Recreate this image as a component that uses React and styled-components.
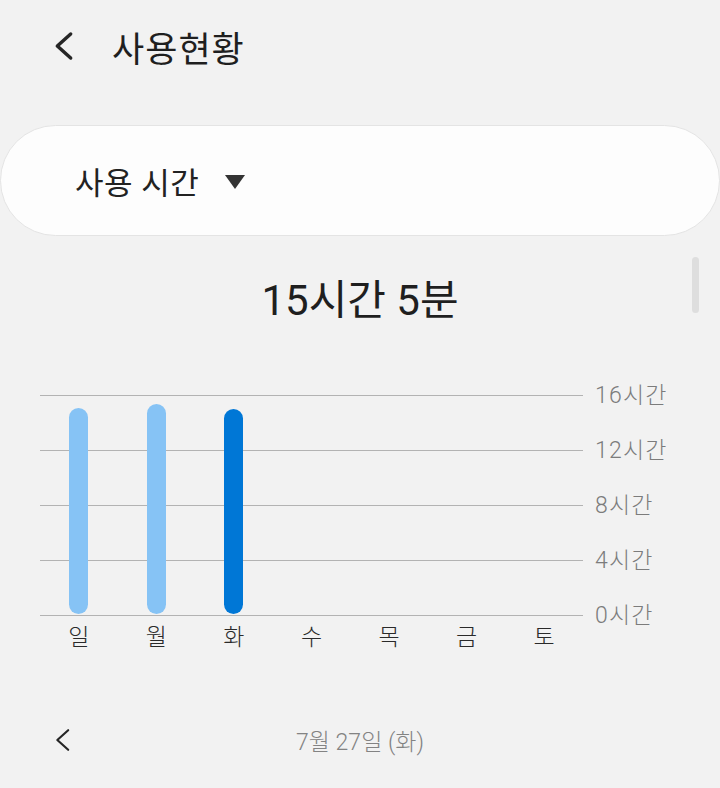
import React from 'react';
import styled, { createGlobalStyle } from 'styled-components';

const GlobalStyle = createGlobalStyle`
  html, body {
    margin: 0;
    padding: 0;
    background: #f2f2f2;
  }
  body {
    font-family: Roboto, "Noto Sans CJK KR", sans-serif;
    font-weight: 300;
    color: #222;
  }
`;

const Page = styled.div`
  position: relative;
  width: 720px;
  height: 788px;
  overflow: hidden;
  background: #f2f2f2;
`;

const Header = styled.header`
  height: 92px;
  display: flex;
  align-items: center;
  padding-left: 52px;
  gap: 36px;
`;

const Title = styled.h1`
  margin: 0;
  font-size: 35px;
  font-weight: 400;
  color: #1f1f1f;
  letter-spacing: 1px;
`;

const Card = styled.div`
  margin-top: 33px;
  height: 111px;
  box-sizing: border-box;
  border: 1px solid #e4e4e4;
  border-radius: 56px;
  background: #fdfdfd;
  display: flex;
  align-items: center;
  padding-left: 74px;
  gap: 26px;
`;

const CardLabel = styled.span`
  font-size: 31px;
  font-weight: 400;
  color: #222;
  letter-spacing: 0.5px;
`;

const Caret = styled.span`
  width: 0;
  height: 0;
  border-left: 10px solid transparent;
  border-right: 10px solid transparent;
  border-top: 14px solid #333;
  margin-top: 2px;
`;

const Summary = styled.div`
  height: 120px;
  display: flex;
  align-items: center;
  justify-content: center;
  font-size: 42px;
  font-weight: 400;
  color: #1f1f1f;
`;

const ScrollThumb = styled.div`
  position: absolute;
  left: 692px;
  top: 257px;
  width: 7px;
  height: 56px;
  border-radius: 4px;
  background: #dedede;
`;

const Chart = styled.section`
  padding: 39px 0 0 40px;
`;

const PlotRow = styled.div`
  display: grid;
  grid-template-columns: 543px auto;
  column-gap: 12px;
`;

const Plot = styled.div`
  height: 221px;
  display: grid;
  grid-template-columns: repeat(7, 1fr);
  align-items: end;
  background: repeating-linear-gradient(
    to bottom,
    #b3b3b3 0,
    #b3b3b3 1px,
    transparent 1px,
    transparent 55px
  );
`;

const BarCell = styled.div`
  display: flex;
  justify-content: center;
  padding-bottom: 2px;
`;

const Bar = styled.div`
  width: 19px;
  border-radius: 10px;
  background: ${(p) => (p.$active ? '#0077d6' : '#86c3f5')};
`;

const Axis = styled.div`
  height: 221px;
  margin-top: -27px;
  display: flex;
  flex-direction: column;
`;

const AxisLabel = styled.span`
  flex: none;
  height: 55px;
  line-height: 55px;
  font-size: 23px;
  letter-spacing: 1.2px;
  color: #7c7c7c;
`;

const Days = styled.div`
  width: 543px;
  display: grid;
  grid-template-columns: repeat(7, 1fr);
`;

const Day = styled.span`
  text-align: center;
  height: 44px;
  line-height: 44px;
  font-size: 23px;
  color: #2a2a2a;
`;

const Footer = styled.div`
  margin-top: 40px;
  height: 80px;
  display: grid;
  grid-template-columns: 1fr auto 1fr;
  align-items: center;
  padding-left: 53px;
  padding-right: 53px;
`;

const DateText = styled.span`
  font-size: 23px;
  color: #838383;
`;

const Chevron = ({ size = 28, stroke = 3 }) => (
  <svg width={size * 0.75} height={size} viewBox="0 0 18 24">
    <path
      d="M14 3 L4 12 L14 21"
      fill="none"
      stroke="#262626"
      strokeWidth={stroke}
      strokeLinecap="round"
      strokeLinejoin="round"
    />
  </svg>
);

const week = [
  { day: '일', hours: 15.1 },
  { day: '월', hours: 15.45 },
  { day: '화', hours: 15.08, active: true },
  { day: '수', hours: 0 },
  { day: '목', hours: 0 },
  { day: '금', hours: 0 },
  { day: '토', hours: 0 },
];

const App = () => {
  const scale = 219 / 16;
  return (
    <Page>
      <GlobalStyle />
      <Header>
        <Chevron size={32} stroke={2.6} />
        <Title>사용현황</Title>
      </Header>
      <Card>
        <CardLabel>사용 시간</CardLabel>
        <Caret />
      </Card>
      <Summary>15시간 5분</Summary>
      <ScrollThumb />
      <Chart>
        <PlotRow>
          <Plot>
            {week.map((d) => (
              <BarCell key={d.day}>
                {d.hours > 0 && (
                  <Bar $active={d.active} style={{ height: `${Math.round(d.hours * scale) - 1}px` }} />
                )}
              </BarCell>
            ))}
          </Plot>
          <Axis>
            {['16시간', '12시간', '8시간', '4시간', '0시간'].map((l) => (
              <AxisLabel key={l}>{l}</AxisLabel>
            ))}
          </Axis>
        </PlotRow>
        <Days>
          {week.map((d) => (
            <Day key={d.day}>{d.day}</Day>
          ))}
        </Days>
      </Chart>
      <Footer>
        <Chevron size={26} stroke={2} />
        <DateText>7월 27일 (화)</DateText>
        <span />
      </Footer>
    </Page>
  );
};

export default App;
